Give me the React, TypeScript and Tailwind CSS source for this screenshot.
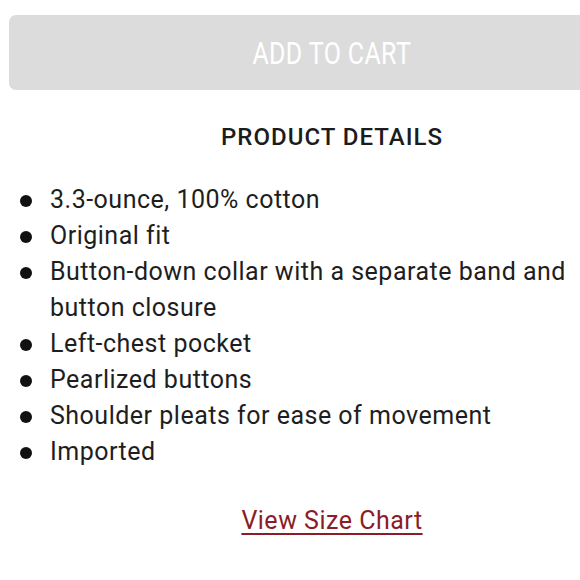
const DETAILS = [
  "3.3-ounce, 100% cotton",
  "Original fit",
  "Button-down collar with a separate band and button closure",
  "Left-chest pocket",
  "Pearlized buttons",
  "Shoulder pleats for ease of movement",
  "Imported",
];

export default function App() {
  return (
    <div className="w-[580px] h-[580px] overflow-hidden bg-white font-['Roboto',sans-serif] text-[#1e1e1e]">
      <div className="ml-[9px] w-[646px] pt-[15px]">
        {/* disabled add to cart */}
        <button className="w-full h-[75px] rounded-[7px] bg-[#dcdcdc] flex items-center justify-center">
          <span className="inline-block text-white text-[32px] leading-none scale-x-[0.78] tracking-[0.5px]">
            ADD TO CART
          </span>
        </button>

        <h2 className="mt-[32px] text-center text-[24px] leading-[30px] font-medium tracking-[1px] text-[#1c1c1c]">
          PRODUCT DETAILS
        </h2>

        <ul className="mt-[30px] pl-[11px] pr-[70px] text-[25px] leading-[36px] tracking-[0.5px]">
          {DETAILS.map((d) => (
            <li key={d} className="flex">
              <span className="w-[30px] flex-shrink-0 flex justify-start pt-[13px]">
                <span className="block w-[12px] h-[12px] rounded-full bg-[#111]" />
              </span>
              <span>{d}</span>
            </li>
          ))}
        </ul>

        <div className="mt-[36px] text-center">
          <a className="text-[25px] leading-[30px] tracking-[0.5px] text-[#8a1d26] underline underline-offset-[4px] decoration-[2px]">
            View Size Chart
          </a>
        </div>
      </div>
    </div>
  );
}
